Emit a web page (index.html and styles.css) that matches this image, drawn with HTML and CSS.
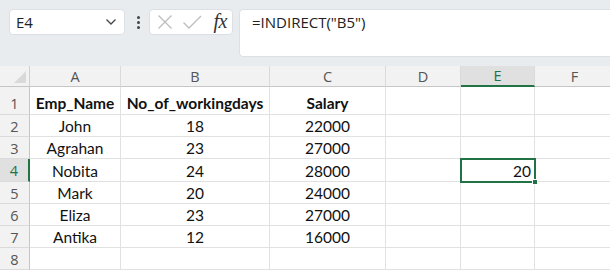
FILE: index.html
```html
<!DOCTYPE html>
<html lang="en">
  <head>
    <meta charset="utf-8" />
    <link rel="stylesheet" href="styles.css">
    <title>INDIRECT</title>
  </head>
  <body>
    <!-- Barra de fórmulas -->
    <div class="formula-bar">
      <div class="name-box">
        <span>E4</span>
        <svg class="name-box__chevron" viewBox="0 0 12 8" width="12" height="8">
          <path d="M1.5 1.5 L6 6 L10.5 1.5" fill="none" stroke="#444" stroke-width="1.3" />
        </svg>
      </div>
      <div class="grip"><i></i><i></i><i></i></div>
      <div class="fx-box">
        <svg viewBox="0 0 16 16" width="16" height="16">
          <path d="M1.5 1.5 L14.5 14.5 M14.5 1.5 L1.5 14.5" stroke="#bdbdbd" stroke-width="1.3" fill="none" />
        </svg>
        <svg viewBox="0 0 20 16" width="20" height="16">
          <path d="M1.5 8.5 L7 14 L19 2" stroke="#bdbdbd" stroke-width="1.3" fill="none" />
        </svg>
        <span class="fx-box__fx">fx</span>
      </div>
      <div class="formula-input">=INDIRECT("B5")</div>
    </div>

    <!-- Planilha -->
    <div class="sheet">
      <div class="corner"></div>
      <div class="col-head">A</div>
      <div class="col-head">B</div>
      <div class="col-head">C</div>
      <div class="col-head">D</div>
      <div class="col-head col-head--active">E</div>
      <div class="col-head">F</div>

      <div class="row-head row-head--first">1</div>
      <div class="cell cell--center cell--bold">Emp_Name</div>
      <div class="cell cell--center cell--bold">No_of_workingdays</div>
      <div class="cell cell--center cell--bold">Salary</div>
      <div class="cell"></div><div class="cell"></div><div class="cell"></div>

      <div class="row-head">2</div>
      <div class="cell cell--center">John</div>
      <div class="cell cell--center">18</div>
      <div class="cell cell--center">22000</div>
      <div class="cell"></div><div class="cell"></div><div class="cell"></div>

      <div class="row-head">3</div>
      <div class="cell cell--center">Agrahan</div>
      <div class="cell cell--center">23</div>
      <div class="cell cell--center">27000</div>
      <div class="cell"></div><div class="cell"></div><div class="cell"></div>

      <div class="row-head row-head--active">4</div>
      <div class="cell cell--center">Nobita</div>
      <div class="cell cell--center">24</div>
      <div class="cell cell--center">28000</div>
      <div class="cell"></div>
      <div class="cell cell--right cell--selected">20<span class="fill-handle"></span></div>
      <div class="cell"></div>

      <div class="row-head">5</div>
      <div class="cell cell--center">Mark</div>
      <div class="cell cell--center">20</div>
      <div class="cell cell--center">24000</div>
      <div class="cell"></div><div class="cell"></div><div class="cell"></div>

      <div class="row-head">6</div>
      <div class="cell cell--center">Eliza</div>
      <div class="cell cell--center">23</div>
      <div class="cell cell--center">27000</div>
      <div class="cell"></div><div class="cell"></div><div class="cell"></div>

      <div class="row-head">7</div>
      <div class="cell cell--center">Antika</div>
      <div class="cell cell--center">12</div>
      <div class="cell cell--center">16000</div>
      <div class="cell"></div><div class="cell"></div><div class="cell"></div>

      <div class="row-head">8</div>
      <div class="cell"></div><div class="cell"></div><div class="cell"></div>
      <div class="cell"></div><div class="cell"></div><div class="cell"></div>
    </div>
  </body>
</html>
```

FILE: styles.css
```css
/* Estilos gerais */
*, *::before, *::after {
  box-sizing: border-box;
}

html, body {
  margin: 0;
  padding: 0;
  background: #ffffff;
  overflow: hidden;
}

/* Barra de fórmulas */
.formula-bar {
  height: 66px;
  background: #e9ecef;
  display: flex;
  align-items: flex-start;
  padding: 9px 0 0 9px;
  font-family: 'Open Sans', 'Noto Sans', sans-serif;
  color: #222;
  overflow: hidden;
}

.name-box {
  width: 116px;
  height: 26px;
  background: #fff;
  border: 1px solid #dcdfe3;
  border-radius: 4px;
  display: flex;
  align-items: center;
  justify-content: space-between;
  padding: 0 7px 0 6px;
  font-size: 15px;
}

.grip {
  width: 24px;
  height: 26px;
  display: flex;
  flex-direction: column;
  align-items: center;
  justify-content: center;
  gap: 2px;
  padding-left: 3px;
}

.grip i {
  width: 3px;
  height: 3px;
  border-radius: 50%;
  background: #444;
}

.fx-box {
  width: 84px;
  height: 26px;
  background: #fff;
  border: 1px solid #dcdfe3;
  border-radius: 4px;
  display: flex;
  align-items: center;
  padding: 0 5px 0 7px;
  gap: 9px;
}

.fx-box__fx {
  margin-left: auto;
  font-family: 'Liberation Serif', serif;
  font-style: italic;
  font-size: 20px;
  line-height: 1;
  color: #333;
  letter-spacing: -0.5px;
  margin-top: -2px;
}

.formula-input {
  margin-left: 6px;
  flex: 1;
  height: 48px;
  margin-right: -10px;
  background: #fff;
  border: 1px solid #dcdfe3;
  border-radius: 4px;
  padding: 2px 0 0 12px;
  font-size: 15px;
}

/* Grade da planilha */
.sheet {
  display: grid;
  grid-template-columns: 30px 91px 149px 116px 75px 74px 80px;
  grid-template-rows: 21px 28px repeat(7, 22.2px);
  font-family: 'Lato', 'Liberation Sans', sans-serif;
  font-size: 15.5px;
  color: #111;
}

.corner {
  background: #f2f2f2;
  border-right: 1px solid #d0d0d0;
  border-bottom: 1px solid #c6c6c6;
  position: relative;
}

.corner::after {
  content: '';
  position: absolute;
  right: 3px;
  bottom: 3px;
  border-style: solid;
  border-width: 0 0 12px 12px;
  border-color: transparent transparent #d9d9d9 transparent;
}

.col-head {
  background: #f2f2f2;
  border-right: 1px solid #dadada;
  border-bottom: 1px solid #c6c6c6;
  display: flex;
  align-items: center;
  justify-content: center;
  font-family: 'Open Sans', 'Noto Sans', sans-serif;
  font-size: 14.5px;
  color: #555;
}

.col-head--active {
  background: #e0e0e0;
  border-bottom: 2px solid #217346;
  color: #217346;
}

.row-head {
  background: #f2f2f2;
  border-right: 1px solid #c6c6c6;
  border-bottom: 1px solid #dadada;
  display: flex;
  align-items: center;
  justify-content: center;
  padding-top: 2px;
  font-family: 'Open Sans', 'Noto Sans', sans-serif;
  font-size: 14.5px;
  color: #555;
}

.row-head--first {
  align-items: flex-end;
  padding-bottom: 1px;
}

.row-head--active {
  background: #e0e0e0;
  border-right: 2px solid #217346;
  color: #217346;
}

.cell {
  border-right: 1px solid #e1e1e1;
  border-bottom: 1px solid #e1e1e1;
  display: flex;
  align-items: flex-end;
  padding: 0 3px 1px;
  white-space: nowrap;
  overflow: visible;
}

.cell--center {
  justify-content: center;
}

.cell--right {
  justify-content: flex-end;
}

.cell--bold {
  font-weight: 700;
  padding-bottom: 2px;
}

.cell--selected {
  position: relative;
  outline: 2px solid #217346;
  outline-offset: -1px;
  z-index: 1;
}

.fill-handle {
  position: absolute;
  right: -4px;
  bottom: -4px;
  width: 6px;
  height: 6px;
  background: #217346;
  border: 1px solid #fff;
}
```
